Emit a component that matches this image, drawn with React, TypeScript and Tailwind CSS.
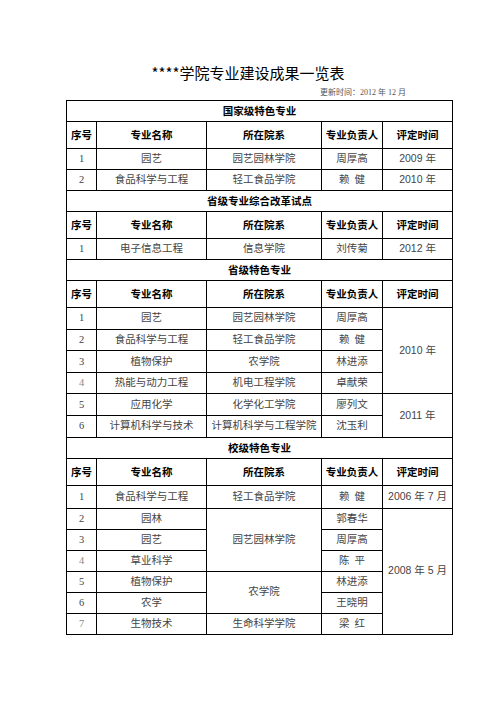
import React from 'react';

const cjk = "font-['Noto_Sans_CJK_SC',sans-serif]";
const serif = "font-['Liberation_Serif','Noto_Sans_CJK_SC',serif]";
const sansNum = "font-['Liberation_Sans','Noto_Sans_CJK_SC',sans-serif]";

const cell = 'border border-black text-center align-middle p-0';
const dataCell = `${cell} text-[10.5px] text-[#444] ${serif}`;
const dateCell = `${cell} text-[10.5px] text-[#444] ${sansNum}`;

function Section({ title }: { title: string }) {
  return (
    <tr className="h-[21px]">
      <td colSpan={5} className={`${cell} text-[10.5px] font-bold text-black ${cjk}`}>
        {title}
      </td>
    </tr>
  );
}

function Header() {
  const heads = ['序号', '专业名称', '所在院系', '专业负责人', '评定时间'];
  return (
    <tr className="h-[27px]">
      {heads.map((h) => (
        <td key={h} className={`${cell} text-[10.5px] font-bold text-black ${cjk}`}>
          {h}
        </td>
      ))}
    </tr>
  );
}

export default function App() {
  return (
    <div className="w-[496px] h-[702px] bg-white">
      <div className="pt-[64px] text-center">
        <h1 className={`text-[15px] leading-[18px] text-black ${cjk}`}>****学院专业建设成果一览表</h1>
      </div>
      <div className={`mt-[6px] pr-[90px] text-right text-[8px] leading-[10px] text-[#555] ${serif}`}>
        更新时间：2012 年 12 月
      </div>
      <table className="ml-[66px] mt-[2px] w-[386px] table-fixed border-collapse border border-black">
        <colgroup>
          <col className="w-[30px]" />
          <col className="w-[110px]" />
          <col className="w-[115px]" />
          <col className="w-[61px]" />
          <col className="w-[70px]" />
        </colgroup>
        <tbody>
          <Section title="国家级特色专业" />
          <Header />
          <tr className="h-[21px]">
            <td className={dataCell}>1</td>
            <td className={dataCell}>园艺</td>
            <td className={dataCell}>园艺园林学院</td>
            <td className={dataCell}>周厚高</td>
            <td className={dateCell}>2009 年</td>
          </tr>
          <tr className="h-[21px]">
            <td className={dataCell}>2</td>
            <td className={dataCell}>食品科学与工程</td>
            <td className={dataCell}>轻工食品学院</td>
            <td className={dataCell}>赖&nbsp;&nbsp;健</td>
            <td className={dateCell}>2010 年</td>
          </tr>

          <Section title="省级专业综合改革试点" />
          <Header />
          <tr className="h-[21px]">
            <td className={dataCell}>1</td>
            <td className={dataCell}>电子信息工程</td>
            <td className={dataCell}>信息学院</td>
            <td className={dataCell}>刘传菊</td>
            <td className={dateCell}>2012 年</td>
          </tr>

          <Section title="省级特色专业" />
          <Header />
          <tr className="h-[21.6px]">
            <td className={dataCell}>1</td>
            <td className={dataCell}>园艺</td>
            <td className={dataCell}>园艺园林学院</td>
            <td className={dataCell}>周厚高</td>
            <td rowSpan={4} className={dateCell}>2010 年</td>
          </tr>
          <tr className="h-[21.6px]">
            <td className={dataCell}>2</td>
            <td className={dataCell}>食品科学与工程</td>
            <td className={dataCell}>轻工食品学院</td>
            <td className={dataCell}>赖&nbsp;&nbsp;健</td>
          </tr>
          <tr className="h-[21.6px]">
            <td className={dataCell}>3</td>
            <td className={dataCell}>植物保护</td>
            <td className={dataCell}>农学院</td>
            <td className={dataCell}>林进添</td>
          </tr>
          <tr className="h-[21.6px]">
            <td className={`${dataCell} text-[#888]`}>4</td>
            <td className={dataCell}>热能与动力工程</td>
            <td className={dataCell}>机电工程学院</td>
            <td className={dataCell}>卓献荣</td>
          </tr>
          <tr className="h-[21.6px]">
            <td className={dataCell}>5</td>
            <td className={dataCell}>应用化学</td>
            <td className={dataCell}>化学化工学院</td>
            <td className={dataCell}>廖列文</td>
            <td rowSpan={2} className={dateCell}>2011 年</td>
          </tr>
          <tr className="h-[21.6px]">
            <td className={dataCell}>6</td>
            <td className={dataCell}>计算机科学与技术</td>
            <td className={dataCell}>计算机科学与工程学院</td>
            <td className={dataCell}>沈玉利</td>
          </tr>

          <Section title="校级特色专业" />
          <Header />
          <tr className="h-[23px]">
            <td className={dataCell}>1</td>
            <td className={dataCell}>食品科学与工程</td>
            <td className={dataCell}>轻工食品学院</td>
            <td className={dataCell}>赖&nbsp;&nbsp;健</td>
            <td className={dateCell}>2006 年 7 月</td>
          </tr>
          <tr className="h-[21px]">
            <td className={dataCell}>2</td>
            <td className={dataCell}>园林</td>
            <td rowSpan={3} className={dataCell}>园艺园林学院</td>
            <td className={dataCell}>郭春华</td>
            <td rowSpan={6} className={dateCell}>2008 年 5 月</td>
          </tr>
          <tr className="h-[21px]">
            <td className={dataCell}>3</td>
            <td className={dataCell}>园艺</td>
            <td className={dataCell}>周厚高</td>
          </tr>
          <tr className="h-[21px]">
            <td className={`${dataCell} text-[#888]`}>4</td>
            <td className={dataCell}>草业科学</td>
            <td className={dataCell}>陈&nbsp;&nbsp;平</td>
          </tr>
          <tr className="h-[21px]">
            <td className={dataCell}>5</td>
            <td className={dataCell}>植物保护</td>
            <td rowSpan={2} className={dataCell}>农学院</td>
            <td className={dataCell}>林进添</td>
          </tr>
          <tr className="h-[21px]">
            <td className={dataCell}>6</td>
            <td className={dataCell}>农学</td>
            <td className={dataCell}>王晓明</td>
          </tr>
          <tr className="h-[21px]">
            <td className={`${dataCell} text-[#888]`}>7</td>
            <td className={dataCell}>生物技术</td>
            <td className={dataCell}>生命科学学院</td>
            <td className={dataCell}>梁&nbsp;&nbsp;红</td>
          </tr>
        </tbody>
      </table>
    </div>
  );
}
